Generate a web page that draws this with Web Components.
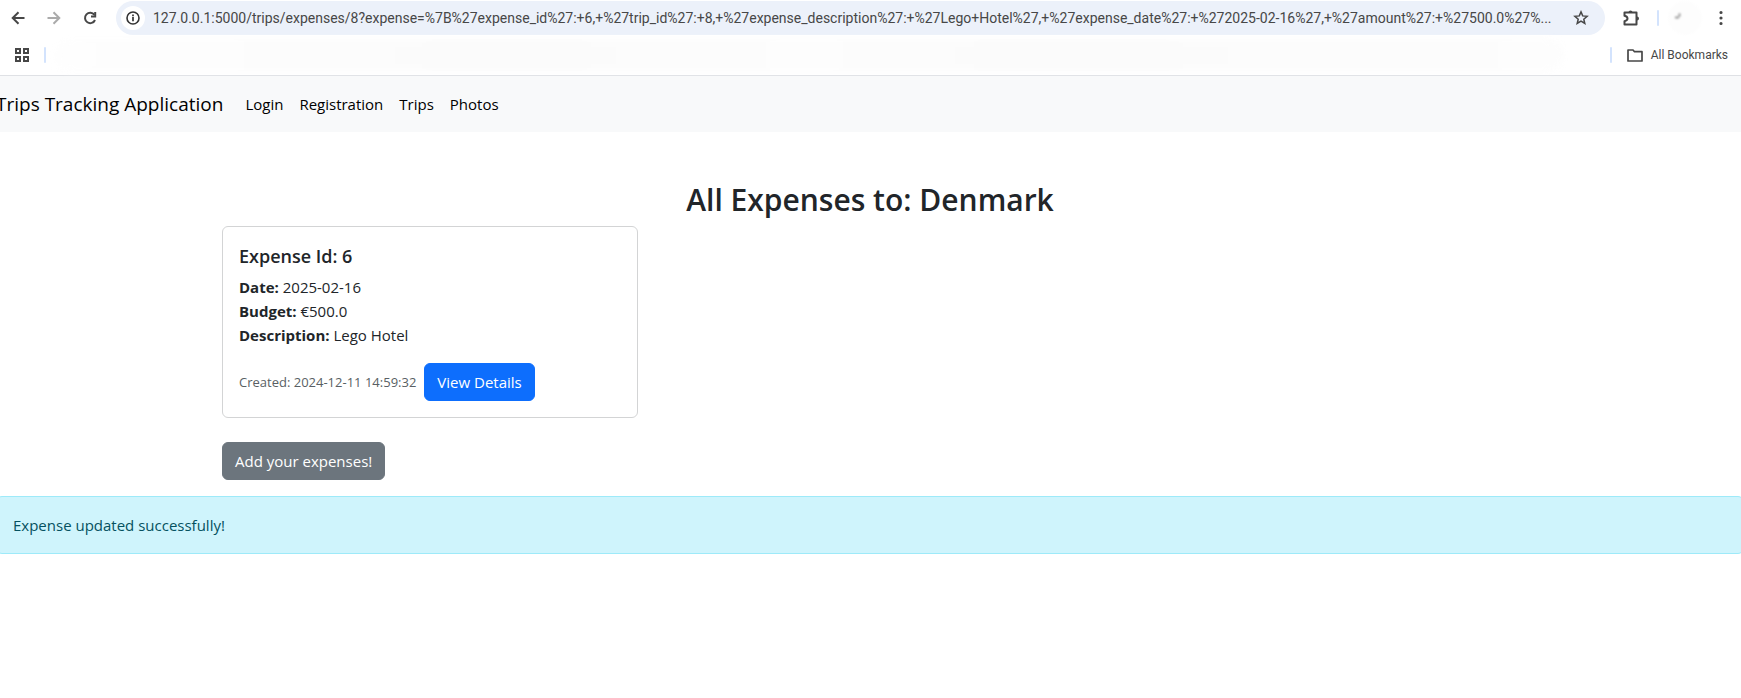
<!DOCTYPE html>
<html lang="en">
<head>
<meta charset="utf-8">
<title>Trips Tracking Application</title>
<style>
  html { overflow-x: hidden; background: #fff; }
  body { margin: 0; font: 15px/24px "Open Sans", "Noto Sans", sans-serif; color: #212529; }
</style>
</head>
<body>
<browser-bar></browser-bar>
<trips-page>
  <nav-bar slot="nav"></nav-bar>
  <page-title slot="title">All Expenses to: Denmark</page-title>
  <expense-card>
    <span slot="title">Expense Id: 6</span>
    <span slot="date">2025-02-16</span>
    <span slot="budget">€500.0</span>
    <span slot="description">Lego Hotel</span>
    <span slot="created">Created: 2024-12-11 14:59:32</span>
    <link-button slot="action">View Details</link-button>
  </expense-card>
  <link-button slot="add" variant="secondary">Add your expenses!</link-button>
  <flash-alert slot="alert">Expense updated successfully!</flash-alert>
</trips-page>

<script>
function define(name, html) {
  const template = document.createElement('template');
  template.innerHTML = html;
  customElements.define(name, class extends HTMLElement {
    constructor() {
      super();
      this.attachShadow({ mode: 'open' }).append(template.content.cloneNode(true));
    }
  });
}

define('icon-button', `
  <style>
    :host { display: block; width: 36px; height: 34px; flex: none; }
    button { display: grid; place-items: center; width: 100%; height: 100%; padding: 0; border: 0; background: none; color: inherit; border-radius: 50%; }
  </style>
  <button type="button"><slot></slot></button>`);

define('browser-bar', `
  <style>
    :host { display: block; background: #fff; border-bottom: 1px solid #dfe1e5; color: #474747; }
    svg { display: block; fill: none; stroke: currentColor; stroke-width: 2; }
    .tools { display: flex; align-items: center; padding: 1px 2px 1px 0; }
    .omnibox { flex: 1; min-width: 0; display: flex; align-items: center; height: 34px; margin: 0 8px; box-sizing: border-box; padding: 0 12px 0 5px; border-radius: 17px; background: #ecf1fa; }
    .info { width: 24px; height: 24px; border-radius: 50%; background: #fff; color: #333; }
    .star { width: 24px; }
    input { flex: 1; min-width: 0; height: 24px; margin: 0 0 0 8px; padding: 0; border: 0; outline: 0; background: none; color: #474747; font: 14px/24px Roboto, sans-serif; }
    .divider { width: 2px; height: 16px; flex: none; border-radius: 1px; background: #d3e3fd; }
    .tools .divider { margin: 0 8px; }
    .off { color: #ababab; }
    .profile { display: block; width: 36px; height: 36px; margin: -1px 0; border-radius: 50%; background: radial-gradient(circle, #fdfdfd 60%, #fff 72%); }
    .marks { display: flex; align-items: center; height: 38px; padding: 0 13px 1px 4px; }
    .marks icon-button { margin-right: 4px; }
    .list { flex: 1; height: 32px; margin: 0 46px 0 8px; border-radius: 16px; background: linear-gradient(90deg, #fefefe, #fbfbfb 30%, #fdfdfd 50%, #fbfbfb 65%, #fdfdfd); filter: blur(3px); }
    a { display: flex; align-items: center; gap: 8px; margin-left: 15px; color: #474747; font: 12px/16px Roboto, sans-serif; text-decoration: none; }
  </style>
  <div class="tools">
    <icon-button><svg width="14" height="14" viewBox="0 0 14 14" aria-label="Back"><path d="M13.5 7H2M7.5 1.2 1.7 7l5.800 5.800"/></svg></icon-button>
    <icon-button class="off"><svg width="14" height="14" viewBox="0 0 14 14" aria-label="Forward"><path d="M.5 7H12M6.500 1.200 12.300 7l-5.800 5.800"/></svg></icon-button>
    <icon-button><svg width="14" height="14" viewBox="0 0 14 14" aria-label="Reload"><path d="M12 9a5.200 5.200 0 1 1-.6-5.200"/><path d="M12.200 1v4.500H8"/></svg></icon-button>
    <div class="omnibox">
      <icon-button class="info"><svg width="16" height="16" viewBox="0 0 16 16" aria-label="Site information"><circle cx="8" cy="8" r="6" stroke-width="1.600"/><path d="M8 7v4.200M8 4.600v1.700" stroke-width="1.700"/></svg></icon-button>
      <input aria-label="Address" value="127.0.0.1:5000/trips/expenses/8?expense=%7B%27expense_id%27:+6,+%27trip_id%27:+8,+%27expense_description%27:+%27Lego+Hotel%27,+%27expense_date%27:+%272025-02-16%27,+%27amount%27:+%27500.0%27%...">
      <icon-button class="star"><svg width="16" height="16" viewBox="0 0 16 16" aria-label="Bookmark"><path stroke-width="1.500" d="m8 1.900 1.700 4 4.400.4-3.300 2.900 1 4.300L8 11.200l-3.800 2.300 1-4.300L1.900 6.300l4.400-.4z"/></svg></icon-button>
    </div>
    <icon-button><svg width="18" height="18" viewBox="0 0 18 18" aria-label="Extensions"><path stroke-linejoin="round" d="M2.500 3.500H14.500V15.500H2.500V12.200Q5.500 11.500 5.500 9.500T2.500 6.800z"/><path d="M6.500 3.500a2 2 0 0 1 4 0zM15 7.500a2 2 0 0 1 0 4z" fill="currentColor" stroke="none"/></svg></icon-button>
    <span class="divider"></span>
    <span class="profile"><svg width="36" height="36" viewBox="0 0 36 36" style="filter:blur(1px)"><path d="M8 17.500h4M12.500 13.500v3" stroke="#777" stroke-width="1.600"/></svg></span>
    <icon-button><svg width="4" height="16" viewBox="0 0 4 16" aria-label="Menu"><path d="M2 2.500h0M2 8h0M2 13.500h0" stroke-width="3.200" stroke-linecap="round"/></svg></icon-button>
  </div>
  <div class="marks">
    <icon-button><svg width="14" height="14" viewBox="0 0 14 14" aria-label="Apps"><path d="M1 1h4v4H1zM9 1h4v4H9zM1 9h4v4H1zM9 9h4v4H9z"/></svg></icon-button>
    <span class="divider"></span>
    <div class="list"></div>
    <span class="divider"></span>
    <a href="#bookmarks"><svg width="16" height="13" viewBox="0 0 16 13"><path stroke-width="1.700" stroke-linejoin="round" d="M1 1h5l1.500 1.700H15v9.300H1z"/></svg>All Bookmarks</a>
  </div>`);

define('nav-bar', `
  <style>
    :host { display: block; background: #f8f9fa; }
    nav { display: flex; align-items: center; height: 56px; }
    a { color: #000; text-decoration: none; padding: 8px; }
    .brand { font-size: 19px; padding: 0; margin-right: 14px; }
  </style>
  <nav>
    <a class="brand" href="#home">Trips Tracking Application</a>
    <a href="#login">Login</a><a href="#registration">Registration</a><a href="#trips">Trips</a><a href="#photos">Photos</a>
  </nav>`);

define('page-title', `
  <style>
    :host { display: block; }
    h2 { margin: 48px 0 6px; font-size: 30px; line-height: 40px; font-weight: 600; text-align: center; }
  </style>
  <h2><slot></slot></h2>`);

define('link-button', `
  <style>
    :host { display: inline-block; --fill: #0d6efd; }
    :host([variant=secondary]) { --fill: #6c757d; }
    a { display: block; padding: 6px 12px; border: 1px solid var(--fill); border-radius: 6px; background: var(--fill); color: #fff; text-decoration: none; }
  </style>
  <a href="#expense"><slot></slot></a>`);

define('expense-card', `
  <style>
    :host { display: block; box-sizing: border-box; padding: 16px; border: 1px solid #d3d4d5; border-radius: 6px; background: #fff; }
    h5 { margin: 0 0 6px; font-size: 18px; line-height: 26px; font-weight: 600; }
    p { margin: 0 0 16px; }
    .foot { display: flex; align-items: center; gap: 8px; }
    small { font-size: 13px; color: #595f64; }
  </style>
  <h5><slot name="title"></slot></h5>
  <p>
    <strong>Date:</strong> <slot name="date"></slot><br>
    <strong>Budget:</strong> <slot name="budget"></slot><br>
    <strong>Description:</strong> <slot name="description"></slot>
  </p>
  <div class="foot"><small><slot name="created"></slot></small><slot name="action"></slot></div>`);

define('flash-alert', `
  <style>
    :host { display: block; padding: 16px; border: 1px solid #9eeaf9; border-radius: 6px; background: #cff4fc; color: #055160; }
  </style>
  <div role="alert"><slot></slot></div>`);

define('trips-page', `
  <style>
    :host { display: block; margin: 0 -3px 0 -4px; }
    .container { max-width: 1296px; margin: 0 auto; padding: 0 12px; }
    .grid { display: grid; grid-template-columns: repeat(3, 1fr); gap: 24px; margin-bottom: 24px; }
    .add { display: flex; margin-bottom: 16px; }
  </style>
  <slot name="nav"></slot>
  <main>
    <slot name="title"></slot>
    <div class="container">
      <div class="grid"><slot></slot></div>
      <div class="add"><slot name="add"></slot></div>
    </div>
    <slot name="alert"></slot>
  </main>`);
</script>
</body>
</html>
